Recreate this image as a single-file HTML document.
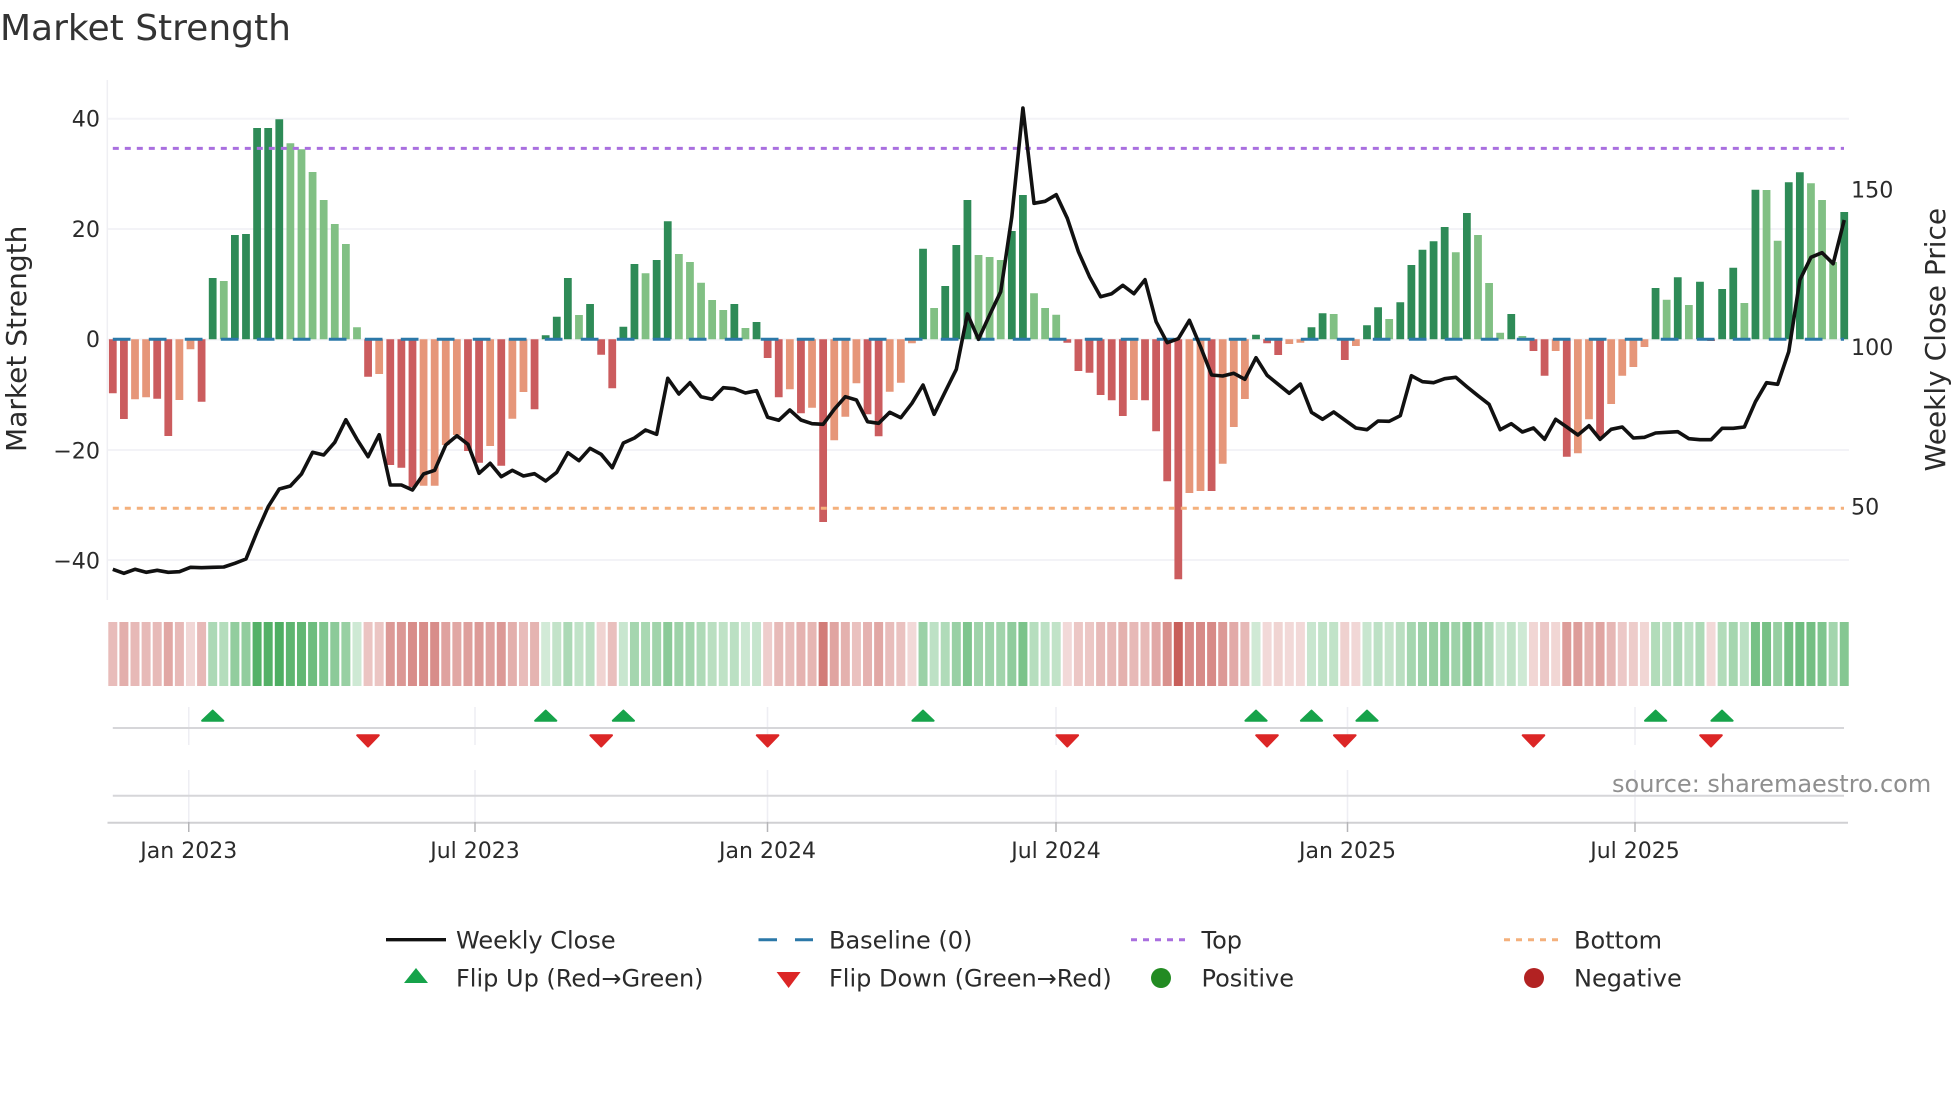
<!DOCTYPE html>
<html lang="en"><head><meta charset="utf-8"><title>Market Strength</title>
<style>html,body{margin:0;padding:0;background:#fff}svg{display:block}text{font-family:"DejaVu Sans","Liberation Sans",sans-serif;fill:#2b2b2b}</style>
</head><body>
<svg xmlns="http://www.w3.org/2000/svg" width="1960" height="1102" viewBox="0 0 1960 1102">
<rect width="1960" height="1102" fill="#fff"/>
<text x="0" y="40" font-size="36" style="fill:#333">Market Strength</text>
<!-- grid -->
<path d="M107 118.7H1849M107 229H1849M107 339.5H1849M107 450H1849M107 560H1849" stroke="#f3f3f7" stroke-width="2" fill="none"/>
<path d="M107.3 80V600" stroke="#efeff3" stroke-width="1.5" fill="none"/>
<g transform="translate(112.8 0) scale(11.099 1)" fill="none">
<!-- bars -->
<path stroke="#2e8b57" stroke-width=".7" d="M9 339.3V278M11 339.3V235M12 339.3V234M13 339.3V128M14 339.3V128M15 339.3V119.3M39 339.3V335.3M40 339.3V316.7M41 339.3V278M43 339.3V304M46 339.3V326.7M47 339.3V264M49 339.3V260M50 339.3V221.3M56 339.3V304M58 339.3V322M73 339.3V248.7M75 339.3V286M76 339.3V245M77 339.3V200M81 339.3V231M82 339.3V195M103 339.3V334.7M108 339.3V327.3M109 339.3V313.3M113 339.3V325.3M114 339.3V307.3M116 339.3V302.3M117 339.3V265M118 339.3V249.7M119 339.3V241.3M120 339.3V227M122 339.3V213M126 339.3V314M139 339.3V288M141 339.3V277.3M143 339.3V281.7M145 339.3V289M146 339.3V267.7M148 339.3V189.7M151 339.3V182.3M152 339.3V172.3M156 339.3V212"/>
<path stroke="#81c084" stroke-width=".7" d="M10 339.3V281M16 339.3V143.3M17 339.3V149.3M18 339.3V172M19 339.3V200M20 339.3V224M21 339.3V244M22 339.3V327.3M42 339.3V315M48 339.3V273.3M51 339.3V254M52 339.3V262M53 339.3V282.7M54 339.3V300M55 339.3V310M57 339.3V328M74 339.3V308M78 339.3V255M79 339.3V257M80 339.3V260M83 339.3V293.3M84 339.3V308M85 339.3V314.7M110 339.3V314M115 339.3V319M121 339.3V252.3M123 339.3V235M124 339.3V283M125 339.3V332.7M127 339.3V336M140 339.3V299.7M142 339.3V305M147 339.3V303M149 339.3V190M150 339.3V240.7M153 339.3V183.3M154 339.3V200M155 339.3V262"/>
<path stroke="#cb5c5e" stroke-width=".7" d="M0 339.3V393.3M1 339.3V419M4 339.3V398.7M5 339.3V436M8 339.3V401.7M23 339.3V376.7M25 339.3V465M26 339.3V467.7M27 339.3V487M32 339.3V451M33 339.3V462.7M35 339.3V465.7M38 339.3V409.3M44 339.3V354.7M45 339.3V388.3M59 339.3V358M60 339.3V397.3M62 339.3V413.3M64 339.3V522M68 339.3V414.3M69 339.3V436.3M86 339.3V342.7M87 339.3V371M88 339.3V372.7M89 339.3V395M90 339.3V400.3M91 339.3V416M93 339.3V400.3M94 339.3V431.3M95 339.3V481.3M96 339.3V579.3M99 339.3V491M104 339.3V343.3M105 339.3V355M111 339.3V360M128 339.3V351M129 339.3V375.7M131 339.3V456.7M134 339.3V437M144 339.3V341"/>
<path stroke="#e69679" stroke-width=".7" d="M2 339.3V399.3M3 339.3V397.3M6 339.3V400M7 339.3V349.3M24 339.3V374M28 339.3V485.7M29 339.3V485.7M30 339.3V445M31 339.3V435M34 339.3V446M36 339.3V418.7M37 339.3V392M61 339.3V389.3M63 339.3V407.7M65 339.3V440.3M66 339.3V416.7M67 339.3V383.3M70 339.3V391.7M71 339.3V382.7M72 339.3V343.3M92 339.3V400M97 339.3V493M98 339.3V491M100 339.3V463.7M101 339.3V427M102 339.3V399M106 339.3V344M107 339.3V342.7M112 339.3V346M130 339.3V351M132 339.3V453.3M133 339.3V419.3M135 339.3V404M136 339.3V375.7M137 339.3V367M138 339.3V347"/>
<!-- heat strip -->
<g stroke="#c85f5a" stroke-width=".81">
<path d="M0 622v64" stroke-opacity=".42"/><path d="M1 622v64" stroke-opacity=".5"/><path d="M2 622v64" stroke-opacity=".44"/><path d="M3 622v64" stroke-opacity=".43"/><path d="M4 622v64" stroke-opacity=".43"/><path d="M5 622v64" stroke-opacity=".55"/><path d="M6 622v64" stroke-opacity=".44"/><path d="M7 622v64" stroke-opacity=".25"/><path d="M8 622v64" stroke-opacity=".44"/>
<path d="M23 622v64" stroke-opacity=".37"/><path d="M24 622v64" stroke-opacity=".36"/><path d="M25 622v64" stroke-opacity=".64"/><path d="M26 622v64" stroke-opacity=".65"/><path d="M27 622v64" stroke-opacity=".71"/><path d="M28 622v64" stroke-opacity=".71"/><path d="M29 622v64" stroke-opacity=".71"/><path d="M30 622v64" stroke-opacity=".58"/><path d="M31 622v64" stroke-opacity=".55"/><path d="M32 622v64" stroke-opacity=".6"/><path d="M33 622v64" stroke-opacity=".63"/><path d="M34 622v64" stroke-opacity=".58"/><path d="M35 622v64" stroke-opacity=".64"/><path d="M36 622v64" stroke-opacity=".5"/><path d="M37 622v64" stroke-opacity=".42"/><path d="M38 622v64" stroke-opacity=".47"/>
<path d="M44 622v64" stroke-opacity=".27"/><path d="M45 622v64" stroke-opacity=".4"/>
<path d="M59 622v64" stroke-opacity=".31"/><path d="M60 622v64" stroke-opacity=".43"/><path d="M61 622v64" stroke-opacity=".41"/><path d="M62 622v64" stroke-opacity=".48"/><path d="M63 622v64" stroke-opacity=".46"/><path d="M64 622v64" stroke-opacity=".82"/><path d="M65 622v64" stroke-opacity=".57"/><path d="M66 622v64" stroke-opacity=".49"/><path d="M67 622v64" stroke-opacity=".39"/><path d="M68 622v64" stroke-opacity=".48"/><path d="M69 622v64" stroke-opacity=".55"/><path d="M70 622v64" stroke-opacity=".41"/><path d="M71 622v64" stroke-opacity=".38"/><path d="M72 622v64" stroke-opacity=".24"/>
<path d="M86 622v64" stroke-opacity=".24"/><path d="M87 622v64" stroke-opacity=".35"/><path d="M88 622v64" stroke-opacity=".35"/><path d="M89 622v64" stroke-opacity=".43"/><path d="M90 622v64" stroke-opacity=".44"/><path d="M91 622v64" stroke-opacity=".49"/><path d="M92 622v64" stroke-opacity=".44"/><path d="M93 622v64" stroke-opacity=".44"/><path d="M94 622v64" stroke-opacity=".54"/><path d="M95 622v64" stroke-opacity=".69"/><path d="M96 622v64" stroke-opacity="1"/><path d="M97 622v64" stroke-opacity=".73"/><path d="M98 622v64" stroke-opacity=".73"/><path d="M99 622v64" stroke-opacity=".73"/><path d="M100 622v64" stroke-opacity=".64"/><path d="M101 622v64" stroke-opacity=".53"/><path d="M102 622v64" stroke-opacity=".44"/>
<path d="M104 622v64" stroke-opacity=".24"/><path d="M105 622v64" stroke-opacity=".27"/><path d="M106 622v64" stroke-opacity=".24"/><path d="M107 622v64" stroke-opacity=".24"/><path d="M111 622v64" stroke-opacity=".29"/><path d="M112 622v64" stroke-opacity=".25"/>
<path d="M128 622v64" stroke-opacity=".26"/><path d="M129 622v64" stroke-opacity=".34"/><path d="M130 622v64" stroke-opacity=".26"/><path d="M131 622v64" stroke-opacity=".62"/><path d="M132 622v64" stroke-opacity=".61"/><path d="M133 622v64" stroke-opacity=".5"/><path d="M134 622v64" stroke-opacity=".56"/><path d="M135 622v64" stroke-opacity=".45"/><path d="M136 622v64" stroke-opacity=".34"/><path d="M137 622v64" stroke-opacity=".32"/><path d="M138 622v64" stroke-opacity=".26"/><path d="M144 622v64" stroke-opacity=".24"/>
</g>
<g stroke="#43a958" stroke-width=".81">
<path d="M9 622v64" stroke-opacity=".44"/><path d="M10 622v64" stroke-opacity=".4"/><path d="M11 622v64" stroke-opacity=".58"/><path d="M12 622v64" stroke-opacity=".58"/><path d="M13 622v64" stroke-opacity=".91"/><path d="M14 622v64" stroke-opacity=".91"/><path d="M15 622v64" stroke-opacity=".94"/><path d="M16 622v64" stroke-opacity=".86"/><path d="M17 622v64" stroke-opacity=".84"/><path d="M18 622v64" stroke-opacity=".77"/><path d="M19 622v64" stroke-opacity=".68"/><path d="M20 622v64" stroke-opacity=".61"/><path d="M21 622v64" stroke-opacity=".55"/><path d="M22 622v64" stroke-opacity=".26"/>
<path d="M39 622v64" stroke-opacity=".24"/><path d="M40 622v64" stroke-opacity=".32"/><path d="M41 622v64" stroke-opacity=".44"/><path d="M42 622v64" stroke-opacity=".33"/><path d="M43 622v64" stroke-opacity=".36"/>
<path d="M46 622v64" stroke-opacity=".29"/><path d="M47 622v64" stroke-opacity=".48"/><path d="M48 622v64" stroke-opacity=".46"/><path d="M49 622v64" stroke-opacity=".5"/><path d="M50 622v64" stroke-opacity=".62"/><path d="M51 622v64" stroke-opacity=".52"/><path d="M52 622v64" stroke-opacity=".49"/><path d="M53 622v64" stroke-opacity=".43"/><path d="M54 622v64" stroke-opacity=".37"/><path d="M55 622v64" stroke-opacity=".34"/><path d="M56 622v64" stroke-opacity=".36"/><path d="M57 622v64" stroke-opacity=".28"/><path d="M58 622v64" stroke-opacity=".3"/>
<path d="M73 622v64" stroke-opacity=".53"/><path d="M74 622v64" stroke-opacity=".35"/><path d="M75 622v64" stroke-opacity=".42"/><path d="M76 622v64" stroke-opacity=".54"/><path d="M77 622v64" stroke-opacity=".68"/><path d="M78 622v64" stroke-opacity=".51"/><path d="M79 622v64" stroke-opacity=".51"/><path d="M80 622v64" stroke-opacity=".5"/><path d="M81 622v64" stroke-opacity=".59"/><path d="M82 622v64" stroke-opacity=".7"/><path d="M83 622v64" stroke-opacity=".39"/><path d="M84 622v64" stroke-opacity=".35"/><path d="M85 622v64" stroke-opacity=".33"/>
<path d="M103 622v64" stroke-opacity=".25"/><path d="M108 622v64" stroke-opacity=".29"/><path d="M109 622v64" stroke-opacity=".33"/><path d="M110 622v64" stroke-opacity=".33"/>
<path d="M113 622v64" stroke-opacity=".29"/><path d="M114 622v64" stroke-opacity=".35"/><path d="M115 622v64" stroke-opacity=".31"/><path d="M116 622v64" stroke-opacity=".37"/><path d="M117 622v64" stroke-opacity=".48"/><path d="M118 622v64" stroke-opacity=".53"/><path d="M119 622v64" stroke-opacity=".56"/><path d="M120 622v64" stroke-opacity=".6"/><path d="M121 622v64" stroke-opacity=".52"/><path d="M122 622v64" stroke-opacity=".64"/><path d="M123 622v64" stroke-opacity=".58"/><path d="M124 622v64" stroke-opacity=".43"/><path d="M125 622v64" stroke-opacity=".27"/><path d="M126 622v64" stroke-opacity=".33"/><path d="M127 622v64" stroke-opacity=".26"/>
<path d="M139 622v64" stroke-opacity=".41"/><path d="M140 622v64" stroke-opacity=".37"/><path d="M141 622v64" stroke-opacity=".44"/><path d="M142 622v64" stroke-opacity=".36"/><path d="M143 622v64" stroke-opacity=".43"/>
<path d="M145 622v64" stroke-opacity=".41"/><path d="M146 622v64" stroke-opacity=".48"/><path d="M147 622v64" stroke-opacity=".36"/><path d="M148 622v64" stroke-opacity=".72"/><path d="M149 622v64" stroke-opacity=".72"/><path d="M150 622v64" stroke-opacity=".56"/><path d="M151 622v64" stroke-opacity=".74"/><path d="M152 622v64" stroke-opacity=".77"/><path d="M153 622v64" stroke-opacity=".74"/><path d="M154 622v64" stroke-opacity=".68"/><path d="M155 622v64" stroke-opacity=".49"/><path d="M156 622v64" stroke-opacity=".65"/>
</g>
</g>
<!-- reference lines -->
<path d="M112.8 339.3H1844" stroke="#2b78a8" stroke-width="3" stroke-dasharray="17.7 18.3" fill="none"/>
<path d="M112.8 148.4H1844" stroke="#a96fdf" stroke-width="3" stroke-dasharray="6 6" fill="none"/>
<path d="M112.8 508.3H1844" stroke="#f4b07c" stroke-width="3" stroke-dasharray="6 6" fill="none"/>
<!-- price line -->
<g transform="translate(112.8 0) scale(11.099 1)">
<polyline fill="none" stroke="#111" stroke-width="3.6" stroke-linejoin="round" vector-effect="non-scaling-stroke" points="0,569.3 1,573.3 2,569.3 3,572.3 4,570.3 5,572.3 6,571.7 7,567.3 8,567.7 9,567.3 10,567 11,563.3 12,559 13,531.7 14,506.7 15,489 16,486 17,474 18,452.3 19,455 20,442.3 21,419.7 22,439.3 23,456.7 24,434.7 25,485 26,485 27,490 28,474 29,470.3 30,445 31,435.7 32,444.3 33,473.3 34,463.3 35,476.7 36,470.3 37,476 38,473.7 39,481 40,472.3 41,452.7 42,460.7 43,448.3 44,454.3 45,467.7 46,443 47,438 48,430 49,434.3 50,378.3 51,394 52,382.7 53,396.7 54,399.3 55,387.7 56,388.7 57,393 58,390.7 59,417.3 60,420.3 61,410 62,420 63,423.7 64,424.3 65,409.3 66,396.7 67,400 68,421.7 69,423.3 70,412.3 71,417.7 72,403.3 73,385 74,414.3 75,391.7 76,369.3 77,314 78,339.3 79,315 80,291.7 81,216.7 82,108 83,203.3 84,201.3 85,194.7 86,218.3 87,251.7 88,276.7 89,296.7 90,293.7 91,285.3 92,293.7 93,279.7 94,321.7 95,342.7 96,338.7 97,320.3 98,346.7 99,375 100,376 101,373.3 102,379.3 103,357.7 104,375.3 105,384.3 106,393.3 107,384 108,412.3 109,419.3 110,412 111,420 112,428 113,429.7 114,421 115,421.3 116,415.7 117,375.7 118,381.7 119,382.7 120,378.7 121,377.3 122,386.7 123,395.7 124,404.3 125,429.7 126,423.7 127,432 128,428 129,439.3 130,419.3 131,427 132,435 133,425.7 134,439.3 135,429.3 136,427 137,438 138,437.3 139,433 140,432.3 141,431.7 142,438.7 143,439.7 144,439.7 145,428.3 146,428.3 147,427 148,401.7 149,382.7 150,384.3 151,351.7 152,280 153,257.3 154,252.7 155,263.7 156,220"/>
</g>
<!-- event rows -->
<path d="M188.75 707V745M475 707V745M767.5 707V745M1056 707V745M1347.5 707V745M1635 707V745M188.75 770V822M475 770V822M767.5 770V822M1056 770V822M1347.5 770V822M1635 770V822" stroke="#eeeef3" stroke-width="1.5" fill="none"/>
<path d="M112.8 728H1844M112.8 795.7H1844" stroke="#d6d6d9" stroke-width="2" fill="none"/>
<path d="M107.5 822.7H1848" stroke="#d0d0d3" stroke-width="2" fill="none"/>
<path d="M188.75 822V832M475 822V832M767.5 822V832M1056 822V832M1347.5 822V832M1635 822V832" stroke="#b5b5b8" stroke-width="1.5" fill="none"/>
<path fill="#16a34a" stroke="#16a34a" stroke-width="2" stroke-linejoin="round" d="M212.7 710.6l10.6 10.1h-21.2zM545.7 710.6l10.6 10.1h-21.2zM623.4 710.6l10.6 10.1h-21.2zM923 710.6l10.6 10.1h-21.2zM1256 710.6l10.6 10.1h-21.2zM1311.5 710.6l10.6 10.1h-21.2zM1367 710.6l10.6 10.1h-21.2zM1655.6 710.6l10.6 10.1h-21.2zM1722 710.6l10.6 10.1h-21.2z"/>
<path fill="#dc2626" stroke="#dc2626" stroke-width="2" stroke-linejoin="round" d="M368 746.5l-10.8-11.2h21.6zM601.2 746.5l-10.8-11.2h21.6zM767.6 746.5l-10.8-11.2h21.6zM1067.3 746.5l-10.8-11.2h21.6zM1267 746.5l-10.8-11.2h21.6zM1344.8 746.5l-10.8-11.2h21.6zM1533.5 746.5l-10.8-11.2h21.6zM1711 746.5l-10.8-11.2h21.6z"/>
<!-- y ticks -->
<g font-size="22.2" text-anchor="end">
<text x="100" y="126.5">40</text><text x="100" y="237">20</text><text x="100" y="347">0</text><text x="100" y="458.3">−20</text><text x="100" y="568.3">−40</text>
</g>
<g font-size="22.2">
<text x="1851" y="197.4">150</text><text x="1851" y="355.2">100</text><text x="1851" y="514.7">50</text>
</g>
<g font-size="22" text-anchor="middle">
<text x="188.75" y="858">Jan 2023</text><text x="475" y="858">Jul 2023</text><text x="767.5" y="858">Jan 2024</text><text x="1056" y="858">Jul 2024</text><text x="1347.5" y="858">Jan 2025</text><text x="1635" y="858">Jul 2025</text>
</g>
<text transform="translate(26 338.8) rotate(-90)" font-size="28" text-anchor="middle">Market Strength</text>
<text transform="translate(1945 339.6) rotate(-90)" font-size="28" text-anchor="middle">Weekly Close Price</text>
<text x="1612" y="792" font-size="24" style="fill:#8f8f8f">source: sharemaestro.com</text>
<!-- legend -->
<path d="M386 939.7H446" stroke="#111" stroke-width="3.4" fill="none"/>
<path d="M758.5 939.7H777M795 939.7H813" stroke="#2b78a8" stroke-width="3" fill="none"/>
<path d="M1131 939.7H1186" stroke="#a96fdf" stroke-width="3" stroke-dasharray="6 6" fill="none"/>
<path d="M1504 939.7H1559" stroke="#f4b07c" stroke-width="3" stroke-dasharray="6 6" fill="none"/>
<path d="M416 968l12 15h-24z" fill="#16a34a"/>
<path d="M788.6 988l-12-16h24z" fill="#dc2626"/>
<circle cx="1161" cy="978" r="10" fill="#228b22"/>
<circle cx="1534" cy="978" r="10" fill="#b22222"/>
<g font-size="24">
<text x="456" y="948.3">Weekly Close</text>
<text x="456" y="986.3">Flip Up (Red→Green)</text>
<text x="829" y="948.3">Baseline (0)</text>
<text x="829" y="986.3">Flip Down (Green→Red)</text>
<text x="1201.5" y="948.3">Top</text>
<text x="1201.5" y="986.3">Positive</text>
<text x="1574" y="948.3">Bottom</text>
<text x="1574" y="986.3">Negative</text>
</g>
</svg>
</body></html>
